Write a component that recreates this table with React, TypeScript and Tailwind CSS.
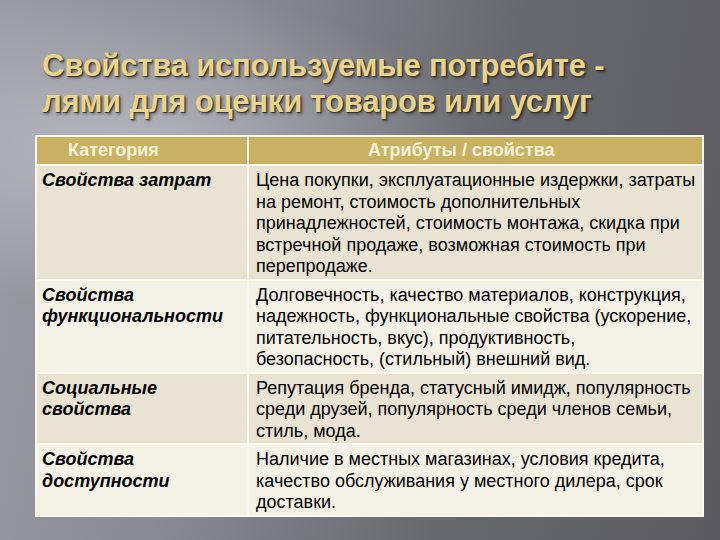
import React from 'react';

interface Row {
  category: string[];
  attributes: string[];
  tone: 'dark' | 'light';
}

const rows: Row[] = [
  {
    category: ['Свойства затрат'],
    attributes: [
      'Цена покупки, эксплуатационные издержки, затраты',
      'на ремонт, стоимость дополнительных',
      'принадлежностей, стоимость монтажа, скидка при',
      'встречной продаже, возможная стоимость при',
      'перепродаже.',
    ],
    tone: 'dark',
  },
  {
    category: ['Свойства', 'функциональности'],
    attributes: [
      'Долговечность, качество материалов, конструкция,',
      'надежность, функциональные свойства (ускорение,',
      'питательность, вкус), продуктивность,',
      'безопасность, (стильный) внешний вид.',
    ],
    tone: 'light',
  },
  {
    category: ['Социальные', 'свойства'],
    attributes: [
      'Репутация бренда, статусный имидж, популярность',
      'среди друзей, популярность среди членов семьи,',
      'стиль, мода.',
    ],
    tone: 'dark',
  },
  {
    category: ['Свойства', 'доступности'],
    attributes: [
      'Наличие в местных магазинах, условия кредита,',
      'качество обслуживания у местного дилера, срок',
      'доставки.',
    ],
    tone: 'light',
  },
];

export default function App() {
  return (
    <div className="w-[720px] h-[540px] overflow-hidden bg-[radial-gradient(ellipse_340px_160px_at_130px_150px,rgba(205,205,215,0.6),transparent),linear-gradient(100deg,#9b9ba3_0%,#8a8a92_30%,#68686f_65%,#5b5b61_100%)] font-['Liberation_Sans',Arial,sans-serif]">
      {/* Title */}
      <div className="pt-[48px] pl-[42px] h-[135px]">
        <h1 className="text-[31px] leading-[36px] font-bold text-[#e9d48c] [text-shadow:1px_1px_1px_#3a3530,2px_2px_3px_rgba(0,0,0,0.45)] tracking-[-0.2px]">
          Свойства используемые потребите -
          <br />
          лями для оценки товаров или услуг
        </h1>
      </div>

      {/* Table */}
      <div className="ml-[35px] w-[669px] bg-[#faf8ef] p-[2px] grid grid-cols-[210px_1fr] gap-[2px] text-[18px] leading-[21.5px] text-black">
        <div className="bg-[#c8b262] h-[27px] flex items-center pl-[31px] text-[18px] font-bold text-[#f7f1dc]">
          Категория
        </div>
        <div className="bg-[#c8b262] h-[27px] flex items-center pl-[119px] text-[18px] font-bold text-[#f7f1dc]">
          Атрибуты / свойства
        </div>

        {rows.map((row, i) => {
          const bg = row.tone === 'dark' ? 'bg-[#e9e3d1]' : 'bg-[#f4f1e7]';
          return (
            <React.Fragment key={i}>
              <div className={`${bg} pl-[5px] pt-[4px] pb-[1px] font-bold italic whitespace-nowrap`}>
                {row.category.map((line) => (
                  <div key={line}>{line}</div>
                ))}
              </div>
              <div className={`${bg} pl-[7px] pt-[4px] pb-[1px] whitespace-nowrap`}>
                {row.attributes.map((line) => (
                  <div key={line}>{line}</div>
                ))}
              </div>
            </React.Fragment>
          );
        })}
      </div>
    </div>
  );
}
